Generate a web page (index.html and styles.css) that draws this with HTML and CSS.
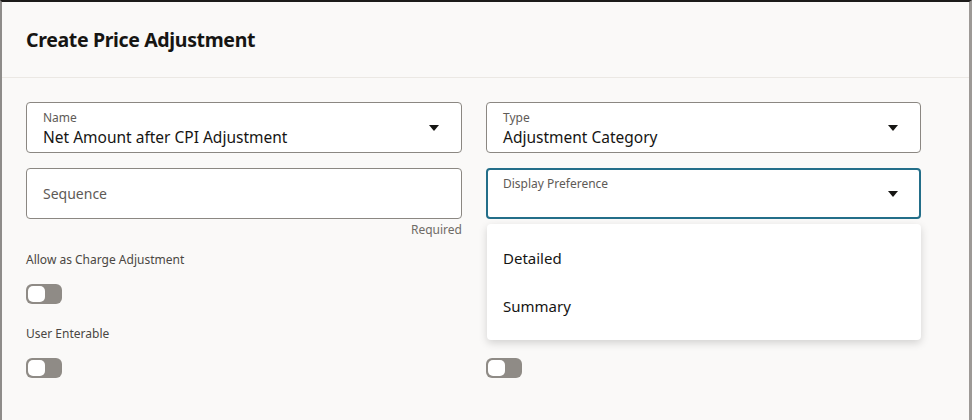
FILE: index.html
```html
<!DOCTYPE html>
<html lang="en">
<head>
<meta charset="utf-8">
<title>Create Price Adjustment</title>
<link rel="stylesheet" href="styles.css">
</head>
<body>
<div class="dialog">
  <header class="dialog-header">
    <h1 class="dialog-title">Create Price Adjustment</h1>
  </header>
  <main class="dialog-body">
    <div class="col">
      <div class="field">
        <div class="field-text">
          <div class="field-label">Name</div>
          <div class="field-value">Net Amount after CPI Adjustment</div>
        </div>
        <span class="caret"></span>
      </div>
      <div class="field field-empty">
        <div class="placeholder">Sequence</div>
      </div>
      <div class="helper">Required</div>
      <div class="switch-label">Allow as Charge Adjustment</div>
      <div class="toggle"><span class="knob"></span></div>
      <div class="switch-label second">User Enterable</div>
      <div class="toggle"><span class="knob"></span></div>
    </div>
    <div class="col">
      <div class="field">
        <div class="field-text">
          <div class="field-label">Type</div>
          <div class="field-value">Adjustment Category</div>
        </div>
        <span class="caret"></span>
      </div>
      <div class="select-wrap">
        <div class="field field-focus">
          <div class="field-text">
            <div class="field-label focus-label">Display Preference</div>
          </div>
          <span class="caret"></span>
        </div>
        <ul class="dropdown">
          <li class="option">Detailed</li>
          <li class="option">Summary</li>
        </ul>
      </div>
      <div class="helper blank">&nbsp;</div>
      <div class="switch-label blank">&nbsp;</div>
      <div class="toggle-spacer"></div>
      <div class="switch-label second blank">&nbsp;</div>
      <div class="toggle"><span class="knob"></span></div>
    </div>
  </main>
</div>
</body>
</html>
```
FILE: styles.css
```css
* { box-sizing: border-box; }
html, body {
  margin: 0;
  padding: 0;
  height: 100%;
}
body {
  font-family: "Noto Sans", "Open Sans", sans-serif;
  color: #161513;
  background: #faf9f8;
  overflow: hidden;
}
.dialog {
  height: 420px;
  background: #faf9f8;
  border-top: 2px solid #1c1b1a;
  border-left: 2px solid #8e8c8a;
  border-right: 3px solid #9d9996;
}
.dialog-header {
  height: 76px;
  border-bottom: 1px solid #ebe8e4;
  padding: 0 24px;
  display: flex;
  align-items: center;
}
.dialog-title {
  margin: 0;
  font-size: 19.5px;
  font-weight: 700;
  color: #161513;
  letter-spacing: -0.35px;
}
.dialog-body {
  display: grid;
  grid-template-columns: 436px 435px;
  column-gap: 24px;
  padding: 24px 0 0 24px;
}
.col {
  display: flex;
  flex-direction: column;
  align-items: flex-start;
}
.field {
  width: 100%;
  height: 51px;
  background: #fff;
  border: 1px solid #8b8782;
  border-radius: 4px;
  display: flex;
  align-items: center;
  padding: 0 16px;
}
.field + .field, .select-wrap { margin-top: 15px; }
.field-text {
  flex: 1;
  align-self: flex-start;
  padding-top: 7px;
}
.field-label {
  font-size: 12px;
  line-height: 16.5px;
  color: #5e5a56;
}
.field-value {
  font-size: 15.5px;
  line-height: 21px;
  color: #161513;
}
.placeholder {
  font-size: 14px;
  color: #5e5a56;
}
.caret {
  width: 0;
  height: 0;
  border-left: 5px solid transparent;
  border-right: 5px solid transparent;
  border-top: 6px solid #161513;
  margin-right: 6px;
}
.select-wrap {
  position: relative;
  width: 100%;
}
.field-focus {
  border: 2px solid #236e89;
  padding: 0 15px;
}
.field-focus .field-text { padding-top: 6px; }
.focus-label { font-size: 12px; }
.dropdown {
  position: absolute;
  left: 1px;
  right: 0;
  top: 56px;
  margin: 0;
  padding: 10px 0;
  list-style: none;
  background: #fff;
  border-radius: 4px;
  box-shadow: 0 3px 8px rgba(0, 0, 0, 0.16);
  z-index: 2;
}
.option {
  height: 48px;
  display: flex;
  align-items: center;
  padding: 0 16px;
  font-size: 15px;
  color: #161513;
}
.helper {
  align-self: flex-end;
  font-size: 12px;
  line-height: 16px;
  margin-top: 3px;
  color: #6f6b66;
}
.switch-label {
  font-size: 12px;
  line-height: 16px;
  margin-top: 14px;
  color: #4a4743;
}
.switch-label.second { margin-top: 22px; }
.toggle {
  margin-top: 16px;
  width: 36px;
  height: 20px;
  border-radius: 6px;
  background: #8f8b86;
  padding: 2px;
}
.toggle-spacer { height: 20px; margin-top: 16px; }
.knob {
  display: block;
  width: 17px;
  height: 16px;
  border-radius: 5px;
  background: #fff;
}
```
